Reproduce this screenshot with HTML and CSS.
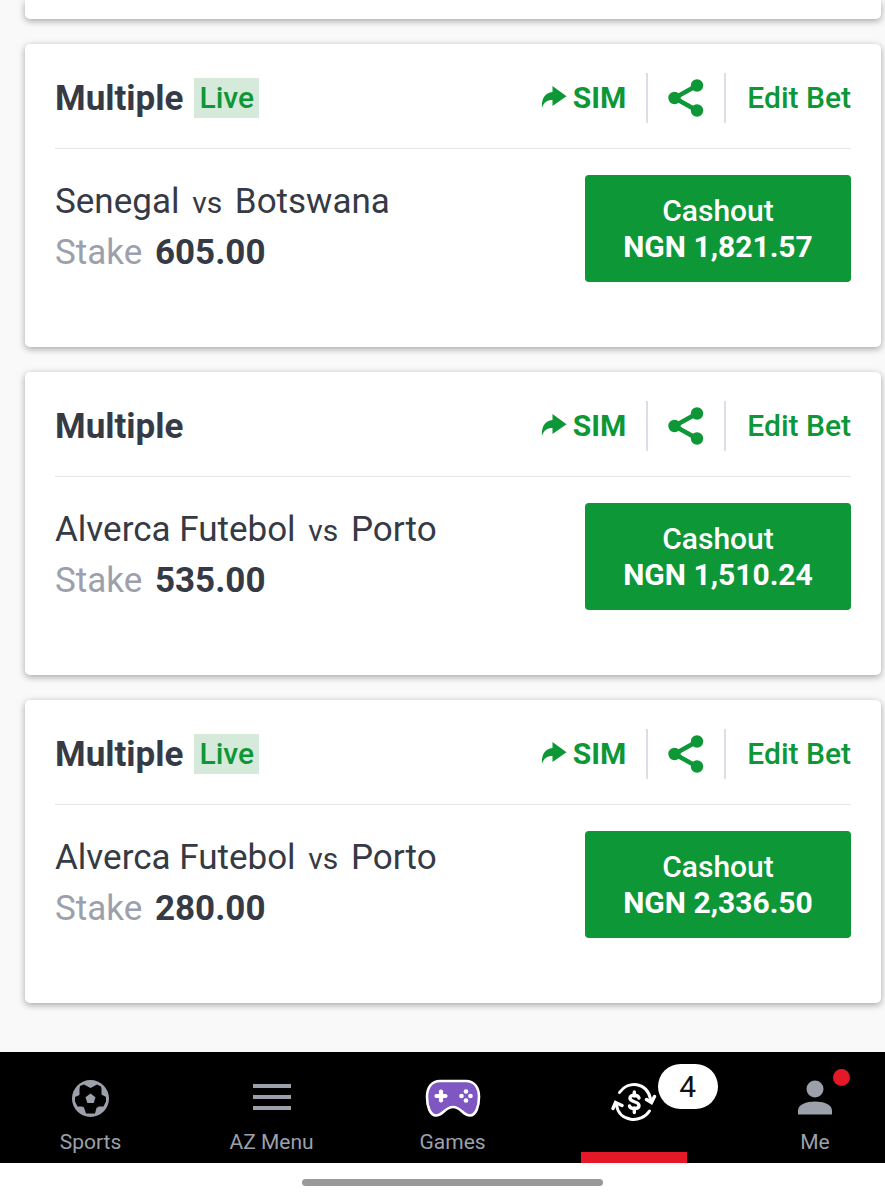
FILE: index.html
```
<!DOCTYPE html>
<html lang="en">
<head>
    <meta charset="UTF-8">
    <meta name="viewport" content="width=device-width, initial-scale=1.0">
    <title>Open Bets</title>
    <link rel="stylesheet" href="styles.css">
</head>
<body>
    <!-- shared icons -->
    <svg class="sprite" aria-hidden="true">
        <symbol id="icon-arrow" viewBox="0 0 26 22">
            <path d="M11.500 0 25.500 10.300 11.500 20V14C6 14 2.500 16.500 1 22C.2 12.500 4 7 11.500 6Z"/>
        </symbol>
        <symbol id="icon-share" viewBox="0 0 36 38">
            <path d="M29 6.500 6.500 19 29 31.500" fill="none" stroke="currentColor" stroke-width="4.500"/>
            <circle cx="29" cy="6.500" r="6.200"/>
            <circle cx="6.500" cy="19" r="6.200"/>
            <circle cx="29" cy="31.500" r="6.200"/>
        </symbol>
    </svg>

    <main class="bets">
        <div class="bet-card bet-card-end"></div>

        <section class="bet-card">
            <div class="bet-header">
                <h2>Multiple</h2>
                <span class="live">Live</span>
                <div class="bet-actions">
                    <button class="action sim"><svg class="arrow"><use href="#icon-arrow"/></svg>SIM</button>
                    <button class="action share" aria-label="Share"><svg><use href="#icon-share"/></svg></button>
                    <button class="action">Edit Bet</button>
                </div>
            </div>
            <div class="bet-body">
                <div class="bet-info">
                    <p>Senegal <span class="vs">vs</span> Botswana</p>
                    <p><span class="stake">Stake</span> <b>605.00</b></p>
                </div>
                <button class="cashout">Cashout<b>NGN 1,821.57</b></button>
            </div>
        </section>

        <section class="bet-card">
            <div class="bet-header">
                <h2>Multiple</h2>
                <div class="bet-actions">
                    <button class="action sim"><svg class="arrow"><use href="#icon-arrow"/></svg>SIM</button>
                    <button class="action share" aria-label="Share"><svg><use href="#icon-share"/></svg></button>
                    <button class="action">Edit Bet</button>
                </div>
            </div>
            <div class="bet-body">
                <div class="bet-info">
                    <p>Alverca Futebol <span class="vs">vs</span> Porto</p>
                    <p><span class="stake">Stake</span> <b>535.00</b></p>
                </div>
                <button class="cashout">Cashout<b>NGN 1,510.24</b></button>
            </div>
        </section>

        <section class="bet-card">
            <div class="bet-header">
                <h2>Multiple</h2>
                <span class="live">Live</span>
                <div class="bet-actions">
                    <button class="action sim"><svg class="arrow"><use href="#icon-arrow"/></svg>SIM</button>
                    <button class="action share" aria-label="Share"><svg><use href="#icon-share"/></svg></button>
                    <button class="action">Edit Bet</button>
                </div>
            </div>
            <div class="bet-body">
                <div class="bet-info">
                    <p>Alverca Futebol <span class="vs">vs</span> Porto</p>
                    <p><span class="stake">Stake</span> <b>280.00</b></p>
                </div>
                <button class="cashout">Cashout<b>NGN 2,336.50</b></button>
            </div>
        </section>
    </main>

    <nav class="bottom-nav">
        <a href="#sports">
            <span class="nav-icon">
                <svg width="37" height="37" viewBox="0 0 37 37">
                    <circle cx="18.500" cy="18.500" r="18.500"/>
                    <path d="M8 6 12 4.500 18.500 8 25 4.500 29 6.500 29.500 9V14.500L34 17V21.500L31.500 26.500H27L24.500 28 23 33.500H14L12 27.500 10 26.500H5.500L3 21.500V17L7.500 15V9Z" fill="#000"/>
                    <path d="M18.500 13.500 23.500 17.300 21.700 23H15.300L13.500 17.300Z"/>
                </svg>
            </span>
            Sports
        </a>
        <a href="#menu">
            <span class="nav-icon">
                <svg width="38" height="32" viewBox="0 0 38 32">
                    <path d="M0 2h38v4H0zM0 13h38v4H0zM0 24h38v4H0z"/>
                </svg>
            </span>
            AZ Menu
        </a>
        <a href="#games">
            <span class="nav-icon">
                <svg width="56" height="38" viewBox="0 0 56 38">
                    <path d="M15 2H41C49 2 54 8 54 18C54 27 51 36.500 45 36.500C38 36.500 36 28 28 28S18 36.500 11 36.500C5 36.500 2 27 2 18C2 8 7 2 15 2Z" fill="#7e57c2" stroke="#fff" stroke-width="2.600"/>
                    <path d="M16 12.500v9M11.500 17h9" stroke="#fff" stroke-width="4.200" stroke-linecap="round"/>
                    <g fill="#fff"><circle cx="41" cy="12.500" r="2.300"/><circle cx="41" cy="21.500" r="2.300"/><circle cx="36.500" cy="17" r="2.300"/><circle cx="45.500" cy="17" r="2.300"/></g>
                </svg>
            </span>
            Games
        </a>
        <a href="#bets" class="active" aria-label="Open bets">
            <span class="nav-icon">
                <svg class="cash" width="46" height="42" viewBox="0 0 46 42">
                    <path d="M8.500 11.500C17-1 36 1 39.500 18M38.500 30C30 43 8 41 5.500 24" stroke-width="3"/>
                    <path d="M35.500 18.500 40.500 21.500 43.500 15.500M2 27.500 4.500 21.500 11 24.500" stroke-width="3.400"/>
                    <path d="M28 17C27 13.500 19 13 19 17.300C19 21.500 28 20 28 24.500C28 28.500 19.500 28.500 18.500 25M23.300 11V15M23.300 27V31.500" stroke-width="3.400"/>
                </svg>
                <span class="badge">4</span>
            </span>
        </a>
        <a href="#me" class="me">
            <span class="nav-icon">
                <svg width="36" height="36" viewBox="0 0 36 36">
                    <circle cx="18" cy="9" r="8.500"/>
                    <path d="M1 34.500V30.500C1 18.500 35 18.500 35 30.500V34.500Z"/>
                </svg>
                <span class="dot"></span>
            </span>
            Me
        </a>
    </nav>

    <div class="home-bar"><span></span></div>
</body>
</html>
```

FILE: styles.css
```
* {
    margin: 0;
    padding: 0;
    box-sizing: border-box;
}

body {
    font-family: Roboto, sans-serif;
    background: #f9f9f9;
    color: #353a45;
    min-height: 100vh;
    display: flex;
    flex-direction: column;
}

button {
    font-family: inherit;
    border: none;
    cursor: pointer;
}

svg {
    fill: currentColor;
}

.sprite {
    position: absolute;
    width: 0;
    height: 0;
}

.bets {
    flex: 1;
    display: flex;
    flex-direction: column;
    gap: 25px;
    padding: 0 4px 49px 25px;
}

.bet-card {
    background: #fff;
    border-radius: 5px;
    padding: 0 30px 65px;
    box-shadow: 0 2px 7px rgba(0, 0, 0, 0.35);
}

.bet-card-end {
    height: 19px;
    padding: 0;
    border-radius: 0 0 5px 5px;
}

.bet-header {
    display: flex;
    align-items: center;
    gap: 11px;
    height: 105px;
    padding-top: 4px;
    border-bottom: 1px solid #e4e5e8;
}

.bet-header h2 {
    font-size: 35px;
    font-weight: 700;
}

.live {
    background: #d6eadb;
    color: #0d9737;
    font-size: 30px;
    font-weight: 500;
    line-height: 40px;
    padding: 0 5px;
}

.bet-actions {
    display: flex;
    align-items: center;
    margin-left: auto;
}

.action {
    display: flex;
    align-items: center;
    height: 50px;
    padding-bottom: 2px;
    background: none;
    color: #0d9737;
    font-size: 30px;
    font-weight: 500;
}

.action.sim {
    gap: 6px;
    font-weight: 700;
}

.arrow {
    width: 26px;
    height: 22px;
}

.action.share {
    margin: 0 21px 0 20px;
    padding: 0 20px;
    border-left: 2px solid #dcdee5;
    border-right: 2px solid #dcdee5;
}

.share svg {
    width: 36px;
    height: 38px;
}

.bet-body {
    display: flex;
    justify-content: space-between;
    padding-top: 26px;
}

.bet-info {
    padding-top: 2px;
    font-size: 35px;
    line-height: 50px;
}

.vs {
    font-size: 30px;
    margin: 0 4px;
}

.stake {
    color: #9ca0ab;
    margin-right: 4px;
}

.cashout {
    width: 266px;
    height: 107px;
    background: #0d9737;
    color: #fff;
    border-radius: 4px;
    font-size: 30px;
    font-weight: 500;
    line-height: 36px;
}

.cashout b {
    display: block;
}

.bottom-nav {
    display: grid;
    grid-template-columns: repeat(4, 9fr) 8fr;
    height: 111px;
    background: #000;
}

.bottom-nav a {
    display: flex;
    flex-direction: column;
    align-items: center;
    position: relative;
    padding-top: 27px;
    color: #9ca0ab;
    font-size: 21px;
    line-height: 24px;
    text-decoration: none;
}

.bottom-nav .me {
    padding-left: 21px;
}

.nav-icon {
    display: flex;
    align-items: center;
    position: relative;
    height: 38px;
    margin-bottom: 13px;
}

.active .nav-icon {
    height: 46px;
}

.active::after {
    content: "";
    position: absolute;
    bottom: 0;
    width: 106px;
    height: 11px;
    background: #e41827;
}

.cash {
    fill: none;
    stroke: #fff;
    stroke-linecap: round;
}

.badge {
    position: absolute;
    left: 47px;
    top: -15px;
    width: 60px;
    height: 45px;
    border-radius: 23px;
    background: #fff;
    color: #111;
    font-size: 30px;
    line-height: 45px;
    text-align: center;
}

.dot {
    position: absolute;
    left: 36px;
    top: -10px;
    width: 17px;
    height: 17px;
    border-radius: 50%;
    background: #e41827;
}

.home-bar {
    display: flex;
    justify-content: center;
    padding: 16px 0 14px 20px;
    background: #fff;
}

.home-bar span {
    width: 301px;
    height: 7px;
    border-radius: 4px;
    background: #999;
}
```
